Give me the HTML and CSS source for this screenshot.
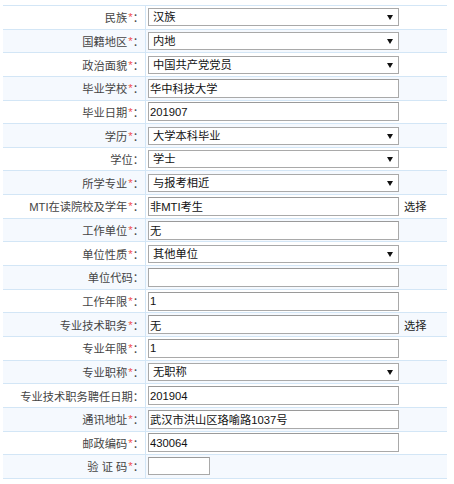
FILE: index.html
```html
<!DOCTYPE html>
<html lang="zh-CN">
<head>
<meta charset="utf-8">
<title>报名信息</title>
<link rel="stylesheet" href="styles.css">
</head>
<body>
<div class="form">
  <div class="row"><div class="lbl">民族<span class="req">*</span>：</div><div class="val"><span class="sel"><select><option>汉族</option></select><svg class="arr" width="6" height="5" viewBox="0 0 6 5"><path d="M0 0H6L3 5Z" fill="#111"/></svg></span></div></div>
  <div class="row"><div class="lbl">国籍地区<span class="req">*</span>：</div><div class="val"><span class="sel"><select><option>内地</option></select><svg class="arr" width="6" height="5" viewBox="0 0 6 5"><path d="M0 0H6L3 5Z" fill="#111"/></svg></span></div></div>
  <div class="row"><div class="lbl">政治面貌<span class="req">*</span>：</div><div class="val"><span class="sel"><select><option>中国共产党党员</option></select><svg class="arr" width="6" height="5" viewBox="0 0 6 5"><path d="M0 0H6L3 5Z" fill="#111"/></svg></span></div></div>
  <div class="row"><div class="lbl">毕业学校<span class="req">*</span>：</div><div class="val"><input class="txt" type="text" value="华中科技大学"></div></div>
  <div class="row"><div class="lbl">毕业日期<span class="req">*</span>：</div><div class="val"><input class="txt" type="text" value="201907"></div></div>
  <div class="row"><div class="lbl">学历<span class="req">*</span>：</div><div class="val"><span class="sel"><select><option>大学本科毕业</option></select><svg class="arr" width="6" height="5" viewBox="0 0 6 5"><path d="M0 0H6L3 5Z" fill="#111"/></svg></span></div></div>
  <div class="row"><div class="lbl">学位：</div><div class="val"><span class="sel"><select><option>学士</option></select><svg class="arr" width="6" height="5" viewBox="0 0 6 5"><path d="M0 0H6L3 5Z" fill="#111"/></svg></span></div></div>
  <div class="row"><div class="lbl">所学专业<span class="req">*</span>：</div><div class="val"><span class="sel"><select><option>与报考相近</option></select><svg class="arr" width="6" height="5" viewBox="0 0 6 5"><path d="M0 0H6L3 5Z" fill="#111"/></svg></span></div></div>
  <div class="row"><div class="lbl">MTI在读院校及学年<span class="req">*</span>：</div><div class="val"><input class="txt" type="text" value="非MTI考生"><span class="pick">选择</span></div></div>
  <div class="row"><div class="lbl">工作单位<span class="req">*</span>：</div><div class="val"><input class="txt" type="text" value="无"></div></div>
  <div class="row"><div class="lbl">单位性质<span class="req">*</span>：</div><div class="val"><span class="sel"><select><option>其他单位</option></select><svg class="arr" width="6" height="5" viewBox="0 0 6 5"><path d="M0 0H6L3 5Z" fill="#111"/></svg></span></div></div>
  <div class="row"><div class="lbl">单位代码：</div><div class="val"><input class="txt" type="text" value=""></div></div>
  <div class="row"><div class="lbl">工作年限<span class="req">*</span>：</div><div class="val"><input class="txt" type="text" value="1"></div></div>
  <div class="row"><div class="lbl">专业技术职务<span class="req">*</span>：</div><div class="val"><input class="txt" type="text" value="无"><span class="pick">选择</span></div></div>
  <div class="row"><div class="lbl">专业年限<span class="req">*</span>：</div><div class="val"><input class="txt" type="text" value="1"></div></div>
  <div class="row"><div class="lbl">专业职称<span class="req">*</span>：</div><div class="val"><span class="sel"><select><option>无职称</option></select><svg class="arr" width="6" height="5" viewBox="0 0 6 5"><path d="M0 0H6L3 5Z" fill="#111"/></svg></span></div></div>
  <div class="row"><div class="lbl">专业技术职务聘任日期：</div><div class="val"><input class="txt" type="text" value="201904"></div></div>
  <div class="row"><div class="lbl">通讯地址<span class="req">*</span>：</div><div class="val"><input class="txt" type="text" value="武汉市洪山区珞喻路1037号"></div></div>
  <div class="row"><div class="lbl">邮政编码<span class="req">*</span>：</div><div class="val"><input class="txt" type="text" value="430064"></div></div>
  <div class="row"><div class="lbl">验&nbsp;证&nbsp;码<span class="req">*</span>：</div><div class="val"><input class="txt code" type="text" value=""></div></div>
</div>
</body>
</html>
```
FILE: styles.css
```css
html, body {
  margin: 0;
  padding: 0;
  background: #fff;
}
body {
  padding: 5px 7px 0 3px;
  font-family: "Liberation Sans", "Noto Sans CJK SC", sans-serif;
  font-size: 11.25px;
  color: #444;
}
.form {
  width: 444px;
  border-top: 1px solid #d3e6f6;
}
.row {
  display: flex;
  height: 23.65px;
  box-sizing: border-box;
  border-bottom: 1px solid #d3e6f6;
  background: #fff;
}
.row:nth-child(even) {
  background: #f5f9fe;
}
.lbl {
  width: 143px;
  box-sizing: border-box;
  border-right: 1px solid #d3e6f6;
  display: flex;
  align-items: center;
  justify-content: flex-end;
  padding-right: 1px;
  white-space: nowrap;
  color: #444;
}
.req {
  color: #f04c4c;
  margin-left: 1px;
}
.val {
  flex: 1;
  display: flex;
  align-items: center;
  padding-left: 2px;
}
.txt {
  width: 251px;
  height: 19px;
  box-sizing: border-box;
  border: 1px solid #a9a9a9;
  border-top-color: #9a9a9a;
  padding: 0 1px;
  margin: 0;
  font-family: inherit;
  font-size: 11.25px;
  color: #111;
  background: #fff;
  outline: none;
}
.txt.code {
  width: 62px;
  height: 18px;
}
.sel {
  position: relative;
  display: inline-block;
  width: 251px;
  height: 18px;
}
.sel select {
  -webkit-appearance: none;
  appearance: none;
  width: 100%;
  height: 100%;
  box-sizing: border-box;
  border: 1px solid #a9a9a9;
  border-radius: 0;
  background: #fff;
  padding: 0 0 0 4px;
  margin: 0;
  font-family: inherit;
  font-size: 11.25px;
  color: #111;
  outline: none;
}
.arr {
  position: absolute;
  right: 6px;
  top: 7px;
  pointer-events: none;
}
.pick {
  margin-left: 5px;
  color: #222;
}
```
